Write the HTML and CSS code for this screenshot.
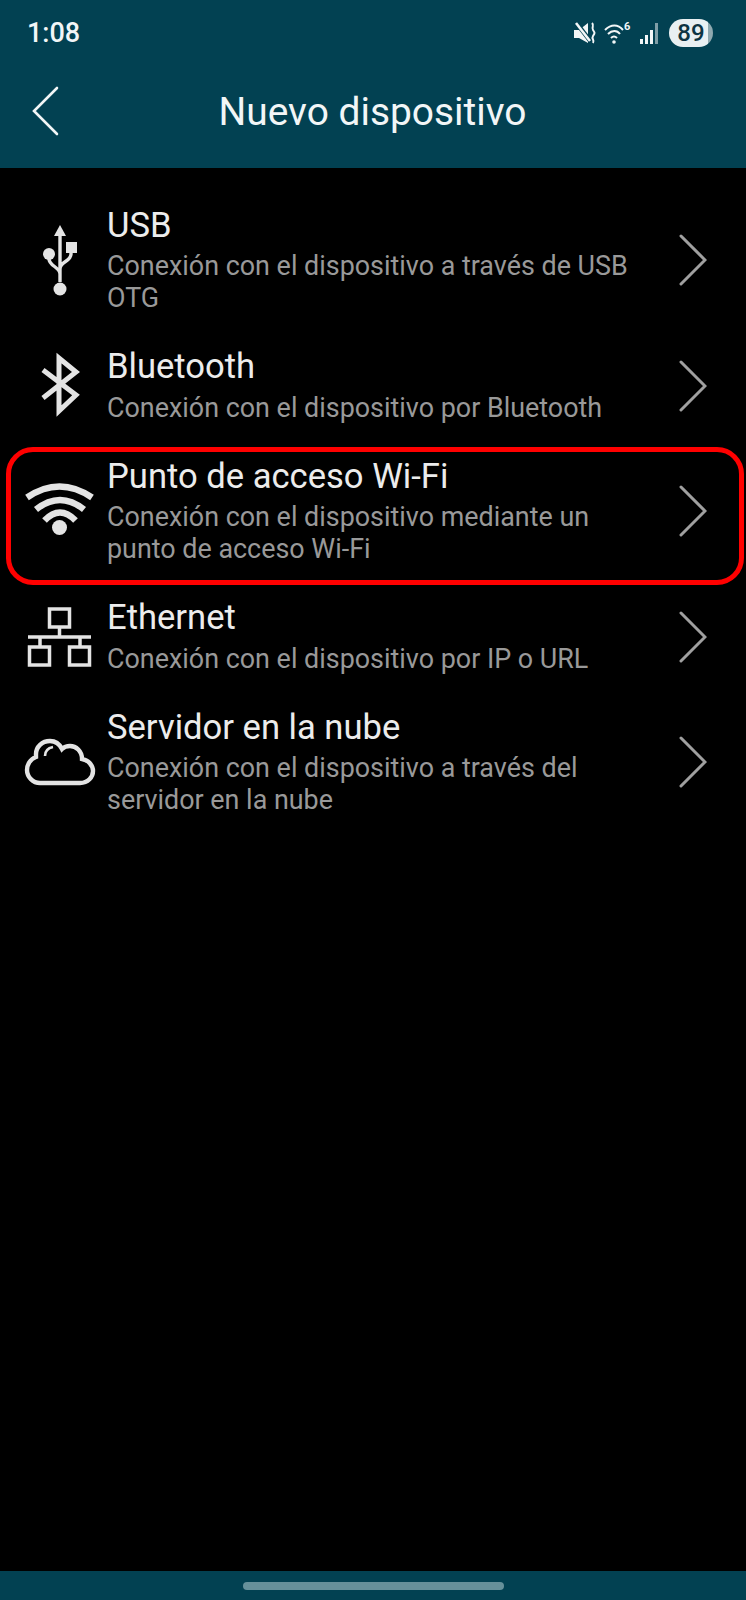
FILE: index.html
```html
<!DOCTYPE html>
<html lang="es">
<head>
    <meta charset="UTF-8">
    <meta name="viewport" content="width=device-width, initial-scale=1.0">
    <title>Nuevo dispositivo</title>
    <link rel="stylesheet" href="styles.css">
</head>
<body>
    <header class="cabecera">
        <div class="estado">
            <span class="hora">1:08</span>
            <div class="estado-iconos">
                <svg class="ico-mute" viewBox="0 0 22 24" width="22" height="24">
                    <path d="M0 9h5l9-7v20l-9-5H0z" fill="#f2f6f7"/>
                    <path d="M1 0l16 21" fill="none" stroke="#024152" stroke-width="4.500"/>
                    <path d="M2 2l14 18" fill="none" stroke="#f2f6f7" stroke-width="2.600"/>
                    <path d="M18 2c3 3-1 4 1 7s2 3 0 6 2 4 0 7" fill="none" stroke="#f2f6f7" stroke-width="2"/>
                </svg>
                <svg class="ico-wifi" viewBox="0 0 27 24" width="27" height="24">
                    <path d="M1 9c6-6 13-6 18 0M4 13c4-4 9-4 12 0M7 17c2-2 4-2 6 0" fill="none" stroke="#f2f6f7" stroke-width="2"/>
                    <circle cx="10" cy="21" r="1.8" fill="#f2f6f7"/>
                    <text x="20" y="9" class="ico-wifi-num">6</text>
                </svg>
                <svg class="ico-senal" viewBox="0 0 20 24" width="20" height="24">
                    <rect x="0" y="18" width="3" height="5" fill="#f2f6f7"/>
                    <rect x="5" y="14" width="3" height="9" fill="#f2f6f7"/>
                    <rect x="10" y="9" width="3" height="14" fill="#f2f6f7"/>
                    <rect x="15" y="2" width="3" height="21" fill="#7f9ea7"/>
                </svg>
                <span class="bateria">89</span>
            </div>
        </div>
        <div class="barra">
            <svg class="atras" viewBox="0 0 28 50" width="28" height="50">
                <path d="M26 2L3 25l23 23" fill="none" stroke="#f2f6f7" stroke-width="2.6" stroke-linecap="round"/>
            </svg>
            <h1>Nuevo dispositivo</h1>
        </div>
    </header>

    <main class="lista">
        <div class="fila">
            <svg class="icono" viewBox="0 0 72 72" width="72" height="72">
                <path d="M36 1l6 11H30z" fill="#e4e4e4"/>
                <path d="M36 10v48M47 28v2c0 8-11 7-11 15M25 35c0 7 11 8 11 15" fill="none" stroke="#e4e4e4" stroke-width="3.4"/>
                <circle cx="36" cy="65" r="6.5" fill="#e4e4e4"/>
                <circle cx="25" cy="30" r="6" fill="#e4e4e4"/>
                <rect x="42" y="18" width="11" height="11" fill="#e4e4e4"/>
            </svg>
            <div class="textos">
                <div class="titulo">USB</div>
                <div class="detalle">Conexión con el dispositivo a través de USB OTG</div>
            </div>
            <svg class="flecha" viewBox="0 0 28 52" width="28" height="52">
                <path d="M2 2l24 24L2 50" fill="none" stroke="#a0a0a0" stroke-width="3" stroke-linecap="round"/>
            </svg>
        </div>

        <div class="fila">
            <svg class="icono" viewBox="0 0 72 72" width="72" height="72">
                <path d="M19 21l33 25-17 16V9l17 14-33 26" fill="none" stroke="#e4e4e4" stroke-width="5"/>
            </svg>
            <div class="textos">
                <div class="titulo">Bluetooth</div>
                <div class="detalle">Conexión con el dispositivo por Bluetooth</div>
            </div>
            <svg class="flecha" viewBox="0 0 28 52" width="28" height="52">
                <path d="M2 2l24 24L2 50" fill="none" stroke="#a0a0a0" stroke-width="3" stroke-linecap="round"/>
            </svg>
        </div>

        <div class="fila">
            <div class="marco"></div>
            <svg class="icono" viewBox="0 0 72 72" width="72" height="72">
                <path d="M3 22.500Q35.500 .5 68 22.500M12 34.500Q36 15.500 60 34.500M20.500 45.500Q36 29.500 51.500 45.500" fill="none" stroke="#e4e4e4" stroke-width="6.500"/>
                <circle cx="35.500" cy="52.500" r="7.500" fill="#e4e4e4"/>
            </svg>
            <div class="textos">
                <div class="titulo">Punto de acceso Wi-Fi</div>
                <div class="detalle">Conexión con el dispositivo mediante un punto de acceso Wi-Fi</div>
            </div>
            <svg class="flecha" viewBox="0 0 28 52" width="28" height="52">
                <path d="M2 2l24 24L2 50" fill="none" stroke="#a0a0a0" stroke-width="3" stroke-linecap="round"/>
            </svg>
        </div>

        <div class="fila">
            <svg class="icono" viewBox="0 0 72 72" width="72" height="72">
                <path d="M25.5 9h20v18h-20zM35.500 27v9M4 37h63M16 37v9M56 37v9M5.500 47h20v18h-20zM45.500 47h20v18h-20z" fill="none" stroke="#e4e4e4" stroke-width="3.5"/>
            </svg>
            <div class="textos">
                <div class="titulo">Ethernet</div>
                <div class="detalle">Conexión con el dispositivo por IP o URL</div>
            </div>
            <svg class="flecha" viewBox="0 0 28 52" width="28" height="52">
                <path d="M2 2l24 24L2 50" fill="none" stroke="#a0a0a0" stroke-width="3" stroke-linecap="round"/>
            </svg>
        </div>

        <div class="fila">
            <svg class="icono" viewBox="0 0 72 72" width="72" height="72">
                <path d="M16 57H56C64 57 69 51 69 45C69 39 64 34 58 33C58 25 52 20 46 20C43 20 40 21 38 23C35 17 30 15 26 15C18 15 12 21 12 28C12 29 12 30 12 31C6 33 3 39 3 44C3 51 9 57 16 57Z" fill="none" stroke="#e4e4e4" stroke-width="4.400"/>
                <path d="M21 30C21 25 24 22 29 21" fill="none" stroke="#e4e4e4" stroke-width="2.6"/>
            </svg>
            <div class="textos">
                <div class="titulo">Servidor en la nube</div>
                <div class="detalle">Conexión con el dispositivo a través del servidor en la nube</div>
            </div>
            <svg class="flecha" viewBox="0 0 28 52" width="28" height="52">
                <path d="M2 2l24 24L2 50" fill="none" stroke="#a0a0a0" stroke-width="3" stroke-linecap="round"/>
            </svg>
        </div>
    </main>

    <footer class="pie">
        <div class="pie-barra"></div>
    </footer>
</body>
</html>
```

FILE: styles.css
```css
body {
    margin: 0;
    min-height: 1600px;
    display: flex;
    flex-direction: column;
    background-color: #000;
    font-family: Roboto, "Liberation Sans", sans-serif;
}

.cabecera {
    height: 168px;
    background-color: #024152;
    color: #f2f6f7;
}

.estado {
    height: 66px;
    display: flex;
    align-items: center;
    justify-content: space-between;
    padding: 0 33px 0 27px;
}

.hora {
    font-size: 27px;
    font-weight: 500;
}

.estado-iconos {
    display: flex;
    align-items: center;
}

.ico-wifi {
    margin-left: 8px;
}

.ico-wifi-num {
    font-size: 11px;
    font-weight: 700;
    fill: #f2f6f7;
}

.ico-senal {
    margin-left: 9px;
}

.bateria {
    margin-left: 9px;
    width: 44px;
    height: 28px;
    border-radius: 14px;
    background: linear-gradient(to right, #e9f0f2 88%, #8fa9b0 88%);
    color: #0d3442;
    font-size: 24px;
    font-weight: 500;
    line-height: 28px;
    text-align: center;
}

.barra {
    height: 90px;
    display: grid;
    grid-template-columns: 1fr auto 1fr;
    align-items: center;
    padding-left: 31px;
    padding-right: 32px;
}

.atras {
    display: block;
}

h1 {
    margin: 0;
    font-size: 38.900px;
    font-weight: 400;
}

.lista {
    flex: 1;
    padding-top: 20px;
}

.fila {
    position: relative;
    display: grid;
    grid-template-columns: 72px 1fr 28px;
    align-items: center;
    padding: 15.500px 39px 15.500px 24px;
}

.icono {
    display: block;
    margin-top: 2px;
}

.flecha {
    display: block;
    margin-top: 3px;
}

.textos {
    padding-left: 11px;
    padding-right: 34px;
}

.titulo {
    font-size: 34.600px;
    line-height: 42px;
    margin-bottom: 4.500px;
    color: #ececec;
}

.detalle {
    font-size: 26.900px;
    line-height: 32px;
    color: #999;
}

.marco {
    position: absolute;
    top: 8px;
    left: 6px;
    width: 738px;
    height: 138px;
    box-sizing: border-box;
    border: 5px solid #f00;
    border-radius: 27px;
}

.pie {
    height: 29px;
    display: flex;
    align-items: center;
    justify-content: center;
    background-color: #024152;
}

.pie-barra {
    width: 261px;
    height: 8px;
    border-radius: 4px;
    background-color: #66909a;
}
```
